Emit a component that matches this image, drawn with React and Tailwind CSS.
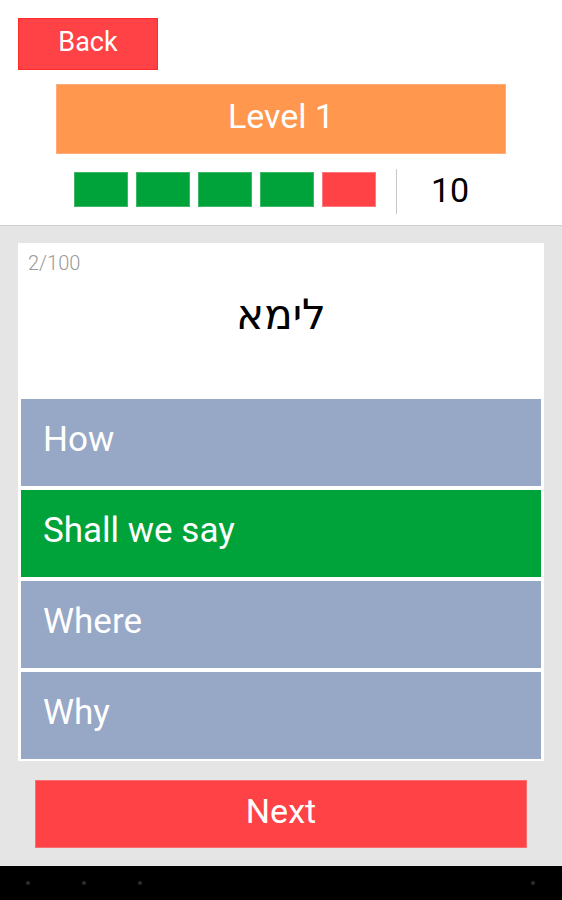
import React from 'react';

const results = ['ok', 'ok', 'ok', 'ok', 'bad'];

const options = [
  { label: 'How', correct: false },
  { label: 'Shall we say', correct: true },
  { label: 'Where', correct: false },
  { label: 'Why', correct: false },
];

const App = () => {
  return (
    <div className="w-full h-[900px] flex flex-col font-['Roboto',_'Liberation_Sans',_sans-serif] bg-[#e5e5e5]">
      {/* Header */}
      <div className="h-[226px] shrink-0 bg-white border-b border-[#cfcfcf] flex flex-col">
        <div className="pt-[18px] pl-[18px]">
          <button className="w-[140px] h-[52px] bg-[#ff4245] border border-[#ff2a2a] text-white text-[27px] leading-none flex items-center justify-center pb-[3px]">
            Back
          </button>
        </div>
        <div className="mt-[14px] mx-[56px] h-[70px] bg-[#ff974f] border border-[#ffac78] text-white text-[34px] leading-none flex items-center justify-center pb-[6px]">
          Level 1
        </div>
        <div className="mt-[15px] pl-[74px] flex items-start">
          <div className="mt-[3px] flex gap-[8px]">
            {results.map((r, i) => (
              <div
                key={i}
                className={
                  r === 'ok'
                    ? 'w-[54px] h-[35px] bg-[#00a339] border border-[#3fb866]'
                    : 'w-[54px] h-[35px] bg-[#ff4245] border border-[#ff7a7c]'
                }
              />
            ))}
          </div>
          <div className="ml-[20px] w-px h-[45px] bg-[#c8c8c8]" />
          <div className="w-[106px] h-[45px] flex items-center justify-center text-[34px] leading-none text-black pb-[3px]">
            10
          </div>
        </div>
      </div>

      {/* Question card */}
      <div className="flex-1 flex flex-col px-[18px] pt-[17px]">
        <div className="bg-white flex flex-col">
          <div className="h-[156px] flex flex-col">
            <div className="pt-[10px] pl-[10px] text-[20px] leading-none font-light text-[#9a9a9a]">2/100</div>
            <div dir="rtl" className="mt-[21px] text-center text-[42px] leading-none text-black font-['DejaVu_Sans',_sans-serif]">
              לימא
            </div>
          </div>
          <div className="flex flex-col gap-[4px] px-[3px] pb-[2px]">
            {options.map((o) => (
              <div
                key={o.label}
                className={`h-[87px] flex items-center pl-[22px] pb-[6px] text-[35px] leading-none text-white ${
                  o.correct ? 'bg-[#00a339]' : 'bg-[#97a7c6]'
                }`}
              >
                {o.label}
              </div>
            ))}
          </div>
        </div>

        <button className="mt-[19px] mx-[17px] h-[68px] bg-[#ff4245] border border-[#ff6d6f] text-white text-[34px] leading-none flex items-center justify-center pb-[6px]">
          Next
        </button>
      </div>

      {/* System nav bar */}
      <div className="h-[34px] shrink-0 bg-black flex items-center pl-[26px] pr-[27px]">
        <div className="flex gap-[52px]">
          <div className="w-[4px] h-[4px] rounded-full bg-[#2c2c2c]" />
          <div className="w-[4px] h-[4px] rounded-full bg-[#2c2c2c]" />
          <div className="w-[4px] h-[4px] rounded-full bg-[#2c2c2c]" />
        </div>
        <div className="ml-auto w-[4px] h-[4px] rounded-full bg-[#2c2c2c]" />
      </div>
    </div>
  );
};

export default App;
